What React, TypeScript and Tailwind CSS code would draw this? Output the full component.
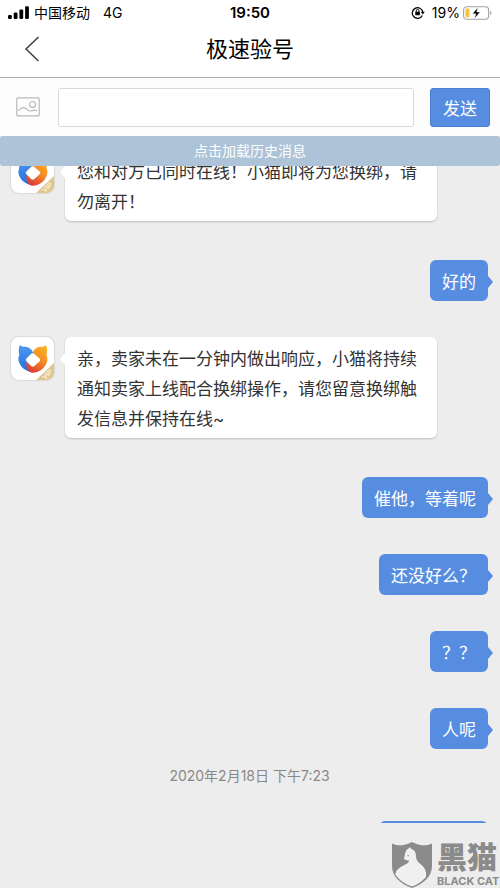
import clsx from 'clsx'

type Message = {
  from: 'agent' | 'me'
  text: string
}

const messages: Message[] = [
  { from: 'agent', text: '您和对方已同时在线！小猫即将为您换绑，请勿离开！' },
  { from: 'me', text: '好的' },
  { from: 'agent', text: '亲，卖家未在一分钟内做出响应，小猫将持续通知卖家上线配合换绑操作，请您留意换绑触发信息并保持在线~' },
  { from: 'me', text: '催他，等着呢' },
  { from: 'me', text: '还没好么？' },
  { from: 'me', text: '？？' },
  { from: 'me', text: '人呢' }
]

function SignalIcon() {
  return (
    <svg viewBox="0 0 21 13" className="w-[21px] h-[13px]" fill="#000">
      <rect x="0" y="9" width="3.8" height="4" rx="1.2" />
      <rect x="5.7" y="6.6" width="3.8" height="6.4" rx="1.2" />
      <rect x="11.4" y="3.4" width="3.8" height="9.6" rx="1.2" />
      <rect x="17.1" y="0.2" width="3.8" height="12.8" rx="1.2" />
    </svg>
  )
}

function RotationLockIcon() {
  return (
    <svg viewBox="0 0 14 13" className="w-[14px] h-[13px]" fill="none" stroke="#000" strokeWidth="1.3">
      <path d="M11.3 9.5A5.3 5.3 0 1 1 11.8 6" />
      <path d="M9.8 5.8h4L11.8 8.6z" fill="#000" stroke="none" />
      <path d="M5.2 6V4.8a1.4 1.4 0 0 1 2.8 0V6" strokeWidth="1" />
      <rect x="4.3" y="5.7" width="4.6" height="3.6" rx="0.5" fill="#000" stroke="none" />
    </svg>
  )
}

function BatteryIcon() {
  return (
    <svg viewBox="0 0 29 14" className="w-[29px] h-[14px]">
      <rect x="0.6" y="0.8" width="25" height="12.4" rx="3.2" fill="#fff" stroke="#a3a3a3" strokeWidth="1.1" />
      <path d="M27.2 4.8c1.6.6 1.6 3.8 0 4.4z" fill="#a3a3a3" />
      <rect x="2.4" y="2.6" width="4" height="8.8" rx="1.4" fill="#fbc344" />
      <path d="M14.8 1.4 9.4 7.8h3.4l-1.2 4.8 5.6-6.6h-3.4z" fill="#000" stroke="#fff" strokeWidth="0.5" />
    </svg>
  )
}

function PictureIcon() {
  return (
    <svg viewBox="0 0 24 20" className="w-6 h-5" fill="none" stroke="#b9b9b9" strokeWidth="1.2">
      <rect x="0.8" y="0.8" width="22.4" height="18" rx="1" />
      <circle cx="16.6" cy="7.4" r="2.9" />
      <path d="M2.4 13.6c2.4-2.7 5.4-3.8 8-1.6 2.6 2.3 3.6 2.6 6 1.6 1.8-.7 3.2-.5 4.8.1" />
    </svg>
  )
}

function Avatar() {
  return (
    <div className="w-[43px] h-[43px] shrink-0 rounded-lg overflow-hidden bg-white shadow-[0_0_2px_rgba(0,0,0,0.25)]">
      <svg viewBox="0 0 43 43" className="w-full h-full">
        <defs>
          <linearGradient id="catBlue" x1="0" y1="0" x2="0" y2="1">
            <stop offset="0" stopColor="#4b98f2" />
            <stop offset="1" stopColor="#2470dc" />
          </linearGradient>
          <linearGradient id="catWarm" x1="0.8" y1="0" x2="0.3" y2="1">
            <stop offset="0" stopColor="#fbb321" />
            <stop offset="0.5" stopColor="#f58a26" />
            <stop offset="1" stopColor="#dc3b35" />
          </linearGradient>
        </defs>
        <path d="M43 26 25 43h18z" fill="#dfc48d" />
        <text
          transform="translate(38 39) rotate(-44)"
          textAnchor="middle"
          fontSize="7"
          fontWeight="700"
          fontFamily="Liberation Sans, sans-serif"
          fill="#fbf1d8"
        >
          VIP
        </text>
        <path
          d="M8.200 10c-.1-1.300.8-1.900 1.900-1.300l2.300 1.200c4.400-.4 7.800 1.600 9.600 5.300V22l-5.500 4 4.500 9.400C14 34 8.600 29.600 7.500 23.300c-.3-2.200.1-4 .9-5.500-.8-2.400-.8-5.200-.2-7.800z"
          fill="url(#catBlue)"
        />
        <path
          d="M35.600 10c.1-1.300-.8-1.900-1.900-1.300l-2.300 1.200c-4.400-.4-7.800 1.600-9.600 5.300V20l5.600 3-5.200 5.500-6-4.500c-2 5.500-.2 10.200 4.800 11.700 7.500.4 14.400-5.400 15.300-12.400.3-2.200-.1-4-.9-5.500.8-2.400.8-5.200.2-7.800z"
          fill="url(#catWarm)"
        />
        <path d="M20.200 16.800q1.600-1.400 3.200.2l5.200 4.600q1.300 1.300 0 2.600l-5.200 4.800q-1.600 1.400-3.200 0l-4.800-4.800q-1.300-1.300 0-2.600z" fill="#fff" />
      </svg>
    </div>
  )
}

function BlackCatLogo() {
  return (
    <svg viewBox="0 0 40 46" className="w-10 h-[46px] shrink-0">
      <path
        d="M0 1.500c4 2 8.500 2.300 12.500 1.200C15.300 2 17.800 1.300 20 0c2.200 1.300 4.700 2 7.500 2.700C31.500 3.800 36 3.500 40 1.500V24c0 10.500-8 17.500-20 22C8 41.500 0 34.500 0 24z"
        fill="#8b8b8b"
      />
      <path
        d="M18 5c.6 1.400 1.300 2 2.600 2.500 2.400 1 3.300 3.400 3.400 6.500.2 4.200 2 6 5 8.500 4 3.300 5.800 7.300 5 12.500C30.500 39 26 42.200 20 44.600 13 42 7 38 3.300 32.500c.6-4.500 4-6.800 7.700-8.800 3.400-1.800 5.700-2.700 6.300-5.500-1.500.5-2.600.3-3.400-.5-1.500.1-2.200-.7-1.700-2.200l.7-2.800c.3-2.600 1-4 2.600-5.400.8-.7 1.800-1.300 2.500-2.300z"
        fill="#f0f0f0"
      />
      <path d="M14.800 13.600l2.200-.7-.5 1.600z" fill="#8b8b8b" />
    </svg>
  )
}

function Bubble({ from, text }: Message) {
  const mine = from === 'me'

  return (
    <div
      className={clsx(
        'relative px-3 pt-[7px] pb-1 rounded-md text-[17px] leading-[30px]',
        mine ? 'bg-[#568de1] text-white' : 'bg-white text-[#333] shadow-[0_1px_2px_rgba(0,0,0,0.2)] mr-[51px]'
      )}
    >
      {text}
      <span
        className={clsx(
          'absolute top-4 border-y-[6px] border-y-transparent',
          mine ? 'left-full border-l-[5px] border-l-[#568de1]' : 'right-full border-r-[5px] border-r-white'
        )}
      />
    </div>
  )
}

export default function App() {
  return (
    <div
      lang="zh-CN"
      className="h-screen flex flex-col bg-[#ededed] text-black font-['Inter','Noto_Sans_CJK_SC',sans-serif]"
    >
      <header className="bg-white border-b border-[#adadad]">
        <div className="grid grid-cols-3 items-center h-[25px] px-2 text-[14px] leading-5">
          <div className="flex items-center gap-[5px]">
            <SignalIcon />
            <span>中国移动</span>
            <span className="ml-2">4G</span>
          </div>
          <time className="text-center text-[15px] font-semibold">19:50</time>
          <div className="flex items-center justify-end gap-[3px]">
            <RotationLockIcon />
            <span className="ml-1">19%</span>
            <BatteryIcon />
          </div>
        </div>
        <div className="grid grid-cols-[64px_1fr_64px] items-center h-[52px] pb-1">
          <button aria-label="返回" className="flex justify-center">
            <svg viewBox="0 0 16 26" className="w-4 h-[26px]" fill="none" stroke="#3d3d47" strokeWidth="1.5">
              <path d="M14.500 1 2 13l12.500 12" />
            </svg>
          </button>
          <h1 className="text-center text-[22px] leading-8">极速验号</h1>
        </div>
      </header>

      <form className="flex items-center bg-[#fdfdfd] h-[58px] pl-4 pr-[10px]" onSubmit={(e) => e.preventDefault()}>
        <button type="button" aria-label="发送图片" className="mr-[18px]">
          <PictureIcon />
        </button>
        <input
          type="text"
          aria-label="消息"
          className="flex-1 min-w-0 h-[39px] mr-4 px-3 bg-white border border-[#d9d9d9] rounded-[3px] text-[17px] outline-none"
        />
        <button
          type="submit"
          className="w-[60px] h-[39px] pt-[3px] rounded-[3px] border border-[#4a80d3] bg-[#568de1] text-white text-[17px] leading-[30px]"
        >
          发送
        </button>
      </form>

      <button className="relative z-10 h-[30px] shrink-0 rounded-[3px] bg-[#adc3d7] text-white text-[14px] leading-[30px]">
        点击加载历史消息
      </button>

      <main className="flex-1 min-h-0 overflow-hidden">
        <div className="-mt-4 pl-[11px] pr-3">
          {messages.map((message, index) => (
            <div
              key={index}
              className={clsx('flex items-start', message.from === 'me' ? 'justify-end mb-9' : 'gap-[11px] mb-[39px]')}
            >
              {message.from === 'agent' && <Avatar />}
              <Bubble {...message} />
            </div>
          ))}
          <p className="-mt-[19px] mb-[35px] text-center text-[14px] leading-5 text-[#888]">2020年2月18日 下午7:23</p>
          <div className="flex justify-end">
            <div className="w-[109px] h-[41px] rounded-md bg-[#568de1]" />
          </div>
        </div>
      </main>

      <footer className="flex justify-end items-end gap-[5px] h-[65px] shrink-0 text-[#8b8b8b]">
        <BlackCatLogo />
        <div className="flex flex-col gap-1 w-[63px] whitespace-nowrap">
          <span className="text-[30px] leading-[30px] font-black font-['Noto_Sans_CJK_SC',sans-serif]">黑猫</span>
          <span className="text-[11px] leading-[14px] font-bold font-['Inter',sans-serif]">BLACK CAT</span>
        </div>
      </footer>
    </div>
  )
}
